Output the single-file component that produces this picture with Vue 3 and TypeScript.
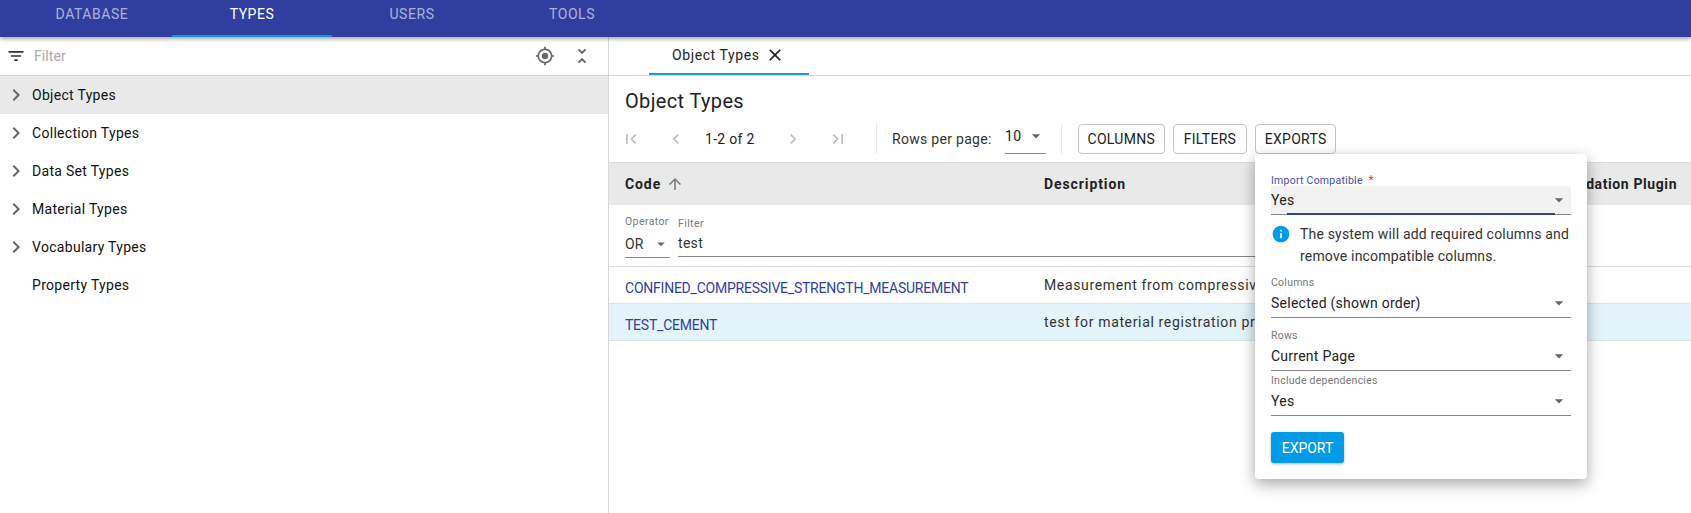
<script setup lang="ts">
const P = {
  first: 'M18.41 16.59L13.82 12l4.59-4.59L17 6l-6 6 6 6zM6 6h2v12H6z',
  prev: 'M15.41 16.59L10.83 12l4.58-4.59L14 6l-6 6 6 6 1.41-1.41z',
  next: 'M8.59 16.59L13.17 12 8.59 7.41 10 6l6 6-6 6-1.41-1.41z',
  last: 'M5.59 7.41L10.18 12l-4.59 4.59L7 18l6-6-6-6zM16 6h2v12h-2z',
  filter: 'M10 18h4v-2h-4v2zM3 6v2h18V6H3zm3 7h12v-2H6v2z',
  up: 'M4 12l1.41 1.41L11 7.83V20h2V7.83l5.58 5.59L20 12l-8-8-8 8z',
  close: 'M19 6.41L17.59 5 12 10.59 6.41 5 5 6.41 10.59 12 5 17.59 6.41 19 12 13.41 17.59 19 19 17.59 13.41 12z',
  target: 'M12 8c-2.21 0-4 1.79-4 4s1.79 4 4 4 4-1.79 4-4-1.79-4-4-4zm8.94 3c-.46-4.17-3.77-7.48-7.94-7.94V1h-2v2.06C6.83 3.52 3.52 6.83 3.06 11H1v2h2.06c.46 4.17 3.77 7.48 7.94 7.94V23h2v-2.06c4.17-.46 7.48-3.77 7.94-7.94H23v-2h-2.06zM12 19c-3.87 0-7-3.13-7-7s3.13-7 7-7 7 3.13 7 7-3.13 7-7 7z',
  fold: 'M7.41 18.59L8.83 20 12 16.83 15.17 20l1.41-1.41L12 14l-4.59 4.59zm9.18-13.18L15.17 4 12 7.17 8.83 4 7.41 5.41 12 10l4.59-4.59z',
  info: 'M12 2C6.48 2 2 6.48 2 12s4.48 10 10 10 10-4.48 10-10S17.52 2 12 2zm1 15h-2v-6h2v6zm0-8h-2V7h2v2z',
  chevron: 'M10 6L8.59 7.41 13.17 12l-4.58 4.59L10 18l6-6z',
  drop: 'M7 10l5 5 5-5z',
}
const navTabs = ['DATABASE', 'TYPES', 'USERS', 'TOOLS']
const tree = [
  { label: 'Object Types', open: true, selected: true },
  { label: 'Collection Types', open: true, selected: false },
  { label: 'Data Set Types', open: true, selected: false },
  { label: 'Material Types', open: true, selected: false },
  { label: 'Vocabulary Types', open: true, selected: false },
  { label: 'Property Types', open: false, selected: false },
]
const rows = [
  { code: 'CONFINED_COMPRESSIVE_STRENGTH_MEASUREMENT', desc: 'Measurement from compressive strength test', on: false },
  { code: 'TEST_CEMENT', desc: 'test for material registration process', on: true },
]
const fields = [
  { label: 'Columns', value: 'Selected (shown order)', cls: 'f-columns' },
  { label: 'Rows', value: 'Current Page', cls: 'f-rows' },
  { label: 'Include dependencies', value: 'Yes', cls: 'f-deps' },
]
</script>

<template>
  <div class="app">
    <header class="nav">
      <div v-for="t in navTabs" :key="t" class="nav-tab" :class="{ active: t === 'TYPES' }">{{ t }}</div>
    </header>
    <div class="body">
      <aside class="side">
        <div class="side-filter">
          <svg class="i-filter" viewBox="0 0 24 24"><path :d="P.filter" /></svg>
          <span class="placeholder">Filter</span>
          <svg class="i-target" viewBox="0 0 24 24"><path :d="P.target" /></svg>
          <svg class="i-fold" viewBox="0 0 24 24"><path :d="P.fold" /></svg>
        </div>
        <div v-for="n in tree" :key="n.label" class="tree-row" :class="{ selected: n.selected }">
          <svg v-if="n.open" class="i-chev" viewBox="0 0 24 24"><path :d="P.chevron" /></svg>
          <span v-else class="i-chev"></span>
          <span>{{ n.label }}</span>
        </div>
      </aside>
      <main class="main">
        <div class="tabbar">
          <div class="tab">
            <span>Object Types</span>
            <svg class="i-close" viewBox="0 0 24 24"><path :d="P.close" /></svg>
          </div>
        </div>
        <h1 class="title">Object Types</h1>
        <div class="pager">
          <svg class="i-page p-first" viewBox="0 0 24 24"><path :d="P.first" /></svg>
          <svg class="i-page p-prev" viewBox="0 0 24 24"><path :d="P.prev" /></svg>
          <span class="range">1-2 of 2</span>
          <svg class="i-page p-next" viewBox="0 0 24 24"><path :d="P.next" /></svg>
          <svg class="i-page p-last" viewBox="0 0 24 24"><path :d="P.last" /></svg>
          <span class="divider d1"></span>
          <span class="rpp">Rows per page:</span>
          <span class="rpp-select">
            <span>10</span>
            <svg class="i-drop" viewBox="0 0 24 24"><path :d="P.drop" /></svg>
          </span>
          <span class="divider d2"></span>
          <button class="btn">COLUMNS</button>
          <button class="btn btn-wide">FILTERS</button>
          <button class="btn">EXPORTS</button>
        </div>
        <div class="thead grid">
          <div class="th">Code <svg class="i-up" viewBox="0 0 24 24"><path :d="P.up" /></svg></div>
          <div class="th">Description</div>
          <div class="th">Validation Plugin</div>
        </div>
        <div class="filter-row">
          <div class="op">
            <div class="mini">Operator</div>
            <div class="op-val"><span>OR</span><svg class="i-drop" viewBox="0 0 24 24"><path :d="P.drop" /></svg></div>
          </div>
          <div class="flt">
            <div class="mini">Filter</div>
            <div class="flt-val">test</div>
          </div>
        </div>
        <div v-for="r in rows" :key="r.code" class="row grid" :class="{ on: r.on }">
          <a class="link">{{ r.code }}</a>
          <span class="desc">{{ r.desc }}</span>
          <span></span>
        </div>
      </main>
    </div>

    <section class="pop">
      <div class="f-first">
        <div class="lbl focus">Import Compatible <i class="req">*</i></div>
        <div class="val filled">
          <span>Yes</span>
          <svg class="i-drop" viewBox="0 0 24 24"><path :d="P.drop" /></svg>
        </div>
      </div>
      <div class="alert">
        <svg class="i-info" viewBox="0 0 24 24"><path :d="P.info" /></svg>
        <p>The system will add required columns and remove incompatible columns.</p>
      </div>
      <div v-for="f in fields" :key="f.label" :class="f.cls">
        <div class="lbl">{{ f.label }}</div>
        <div class="val">
          <span>{{ f.value }}</span>
          <svg class="i-drop" viewBox="0 0 24 24"><path :d="P.drop" /></svg>
        </div>
      </div>
      <button class="export">EXPORT</button>
    </section>
  </div>
</template>

<style>
html, body { margin: 0; background: #fff; }
</style>

<style scoped>
.app {
  position: relative;
  width: 1691px;
  height: 513px;
  overflow: hidden;
  font-family: Roboto, "Liberation Sans", sans-serif;
  font-size: 14px;
  color: #222;
  background: #fff;
  letter-spacing: 0.1px;
}
svg { display: block; flex: none; }
.nav {
  position: relative;
  z-index: 3;
  height: 37px;
  box-sizing: border-box;
  padding-left: 12px;
  display: flex;
  background: #303f9f;
  box-shadow: 0 2px 4px rgba(0, 0, 0, .35);
}
.nav-tab {
  width: 160px;
  height: 37px;
  box-sizing: border-box;
  padding-top: 5px;
  line-height: 18px;
  text-align: center;
  color: rgba(255, 255, 255, .6);
  letter-spacing: .55px;
}
.nav-tab.active { color: #fff; border-bottom: 2px solid #039be5; }
.body { display: flex; height: 476px; }
.side { width: 609px; box-sizing: border-box; border-right: 1px solid #d8d8d8; flex: none; }
.side-filter {
  height: 39px;
  box-sizing: border-box;
  border-bottom: 1px solid #d8d8d8;
  display: flex;
  align-items: center;
  padding-left: 6px;
}
.i-filter { width: 20px; height: 20px; fill: #333; }
.placeholder { margin-left: 8px; color: #aaa; flex: 1; }
.i-target { width: 20px; height: 20px; fill: #666; margin-right: 16px; }
.i-fold { width: 22px; height: 22px; fill: #666; margin-right: 15px; }
.tree-row {
  height: 38px;
  display: flex;
  align-items: center;
  padding-left: 4px;
  color: #111;
  letter-spacing: .3px;
}
.tree-row.selected { background: #e9e9e9; }
.i-chev { width: 24px; height: 24px; fill: #666; margin-right: 4px; display: block; flex: none; }
.main { flex: 1; min-width: 0; }
.tabbar {
  height: 39px;
  box-sizing: border-box;
  border-bottom: 1px solid #d8d8d8;
  padding-left: 40px;
}
.tab {
  width: 160px;
  height: 38px;
  box-sizing: border-box;
  border-bottom: 2px solid #1e9bd7;
  padding-left: 23px;
  display: flex;
  align-items: center;
  gap: 5px;
  color: #222;
  letter-spacing: .6px;
}
.i-close { width: 20px; height: 20px; fill: #222; }
.title {
  margin: 0;
  height: 47px;
  padding: 13px 0 0 16px;
  box-sizing: border-box;
  font-size: 20px;
  font-weight: 400;
  line-height: 24px;
  color: #222;
  letter-spacing: .35px;
}
.pager {
  height: 39px;
  display: flex;
  align-items: center;
  box-sizing: border-box;
  padding: 0 0 8px 0;
  letter-spacing: .3px;
}
.i-page { width: 20px; height: 20px; fill: #bdbdbd; }
.p-first { margin-left: 12px; }
.p-prev { margin-left: 25px; }
.range { margin-left: 19px; width: 58px; }
.p-next { margin-left: 20px; }
.p-last { margin-left: 25px; }
.divider { width: 1px; height: 30px; background: #e8e8e8; }
.d1 { margin-left: 28px; }
.d2 { margin-left: 15px; }
.rpp { margin-left: 15px; width: 113px; color: #333; }
.rpp-select {
  width: 41px;
  height: 30px;
  box-sizing: border-box;
  border-bottom: 1px solid #888;
  display: flex;
  align-items: center;
  justify-content: space-between;
  padding-bottom: 4px;
}
.i-drop { width: 20px; height: 20px; fill: #666; }
.btn {
  height: 30px;
  margin-left: 8px;
  padding: 0 8.5px;
  background: #fff;
  border: 1px solid #c4c4c4;
  border-radius: 4px;
  font: inherit;
  letter-spacing: .3px;
  color: #222;
}
.btn-wide { padding: 0 10px; }
.d2 + .btn { margin-left: 16px; }
.grid {
  display: grid;
  grid-template-columns: 419px 516px 1fr;
  padding-left: 16px;
}
.thead {
  height: 43px;
  background: #e9e9e9;
  border-top: 1px solid #ddd;
  box-sizing: border-box;
  align-items: center;
}
.th { font-weight: 700; color: #222; display: flex; align-items: center; gap: 5px; letter-spacing: .9px; white-space: nowrap; }
.th:last-child { letter-spacing: .6px; }
.i-up { width: 18px; height: 18px; fill: #777; }
.filter-row {
  height: 62px;
  box-sizing: border-box;
  border-bottom: 1px solid #ddd;
  padding: 11px 0 0 16px;
  display: flex;
  gap: 8px;
}
.mini { font-size: 10.5px; line-height: 12px; color: #777; letter-spacing: .4px; }
.op { width: 45px; }
.op-val {
  height: 30px;
  box-sizing: border-box;
  border-bottom: 1px solid #888;
  display: flex;
  align-items: center;
  justify-content: space-between;
  padding-top: 2px;
  color: #333;
}
.op-val .i-drop { width: 18px; height: 18px; }
.flt { width: 820px; padding-top: 2px; }
.flt-val {
  height: 27px;
  box-sizing: border-box;
  border-bottom: 1px solid #888;
  line-height: 27px;
  color: #333;
  letter-spacing: .3px;
}
.row {
  height: 37px;
  box-sizing: border-box;
  border-bottom: 1px solid #e2e2e2;
  align-items: center;
}
.row.on { background: #e3f4fb; }
.link { color: #303f9f; margin-top: 6px; letter-spacing: -.23px; white-space: nowrap; }
.desc { color: #333; white-space: nowrap; letter-spacing: .65px; max-width: 211px; overflow: hidden; }
.pop {
  position: absolute;
  z-index: 5;
  left: 1255px;
  top: 154px;
  width: 332px;
  height: 325px;
  box-sizing: border-box;
  padding: 18px 16px 0;
  background: #fff;
  border-radius: 4px;
  box-shadow: 0 5px 15px rgba(0, 0, 0, .35);
}
.lbl { font-size: 10.5px; height: 14px; line-height: 16px; color: #777; letter-spacing: .25px; white-space: nowrap; }
.lbl.focus { color: #3f4ea8; }
.req { color: #d9483b; font-style: normal; font-size: 12px; margin-left: 3px; }
.val {
  height: 29px;
  box-sizing: border-box;
  border-bottom: 1px solid #8a8a8a;
  display: flex;
  align-items: center;
  justify-content: space-between;
  color: #222;
  letter-spacing: .25px;
}
.val .i-drop { margin-right: 2px; }
.filled {
  background: #f2f2f2;
  height: 29px;
  position: relative;
}
.filled::after {
  content: "";
  position: absolute;
  left: 16px;
  right: 16px;
  bottom: -1px;
  height: 2px;
  background: #303f9f;
}
.alert { display: flex; gap: 9px; margin-top: 9px; }
.i-info { width: 20px; height: 20px; fill: #039be5; }
.alert p { margin: 0; flex: none; line-height: 21.5px; color: #333; letter-spacing: .18px; width: 276px; }
.f-columns { margin-top: 8px; }
.f-rows { margin-top: 10px; }
.f-deps { margin-top: 2px; }
.export {
  display: block;
  margin-top: 16px;
  width: 73px;
  height: 31px;
  padding: 0;
  border: 0;
  border-radius: 3px;
  background: #039be5;
  color: #fff;
  font: inherit;
  letter-spacing: 0;
  box-shadow: 0 1px 3px rgba(0, 0, 0, .3);
}
</style>
